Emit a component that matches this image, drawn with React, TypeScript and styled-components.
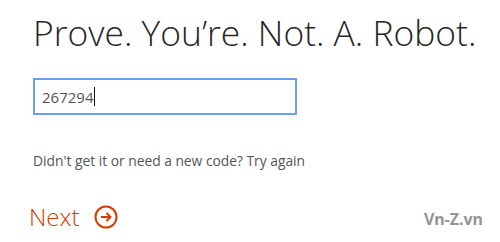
import styled, { createGlobalStyle } from "styled-components";

const Global = createGlobalStyle`
  html, body {
    margin: 0;
    padding: 0;
    background: #fff;
  }
  body {
    font-family: "Open Sans", "Noto Sans", sans-serif;
  }
`;

const Page = styled.div`
  position: relative;
  width: 500px;
  height: 242px;
  overflow: hidden;
  padding: 8px 0 0 33px;
  box-sizing: border-box;
  display: flex;
  flex-direction: column;
`;

const Title = styled.h1`
  margin: 0;
  font-family: "Open Sans", sans-serif;
  font-weight: 300;
  font-size: 35.4px;
  line-height: 48px;
  color: #262626;
  white-space: nowrap;
`;

const CodeBox = styled.div`
  margin-top: 22px;
  width: 264px;
  height: 37px;
  box-sizing: border-box;
  border: 2px solid #6a9ef0;
  display: flex;
  align-items: center;
  padding-left: 7px;
`;

const CodeText = styled.span`
  font-size: 15px;
  color: #555;
`;

const Caret = styled.span`
  display: inline-block;
  width: 1px;
  height: 19px;
  background: #111;
  margin-left: 1px;
`;

const Hint = styled.p`
  margin: 37px 0 0;
  font-size: 13.8px;
  line-height: 18px;
  color: #555;
  white-space: nowrap;
`;

const NextButton = styled.div`
  margin-top: 32px;
  margin-left: -4px;
  display: flex;
  align-items: center;
  gap: 15px;
  color: #d83b01;
  font-size: 24px;
  line-height: 30px;
  font-weight: 300;
`;

const Watermark = styled.div`
  position: absolute;
  right: 17px;
  bottom: 12px;
  font-family: "Noto Sans", sans-serif;
  font-weight: 700;
  font-size: 16px;
  color: #959595;
`;

export default function App() {
  return (
    <>
      <Global />
      <Page>
        <Title>Prove. You’re. Not. A. Robot.</Title>
        <CodeBox>
          <CodeText>267294</CodeText>
          <Caret />
        </CodeBox>
        <Hint>Didn't get it or need a new code? Try again</Hint>
        <NextButton>
          <span>Next</span>
          <svg width="24" height="24" viewBox="0 0 24 24" fill="none" stroke="#d83b01" strokeWidth="2">
            <circle cx="12" cy="12" r="10.5" />
            <path d="M7 12h9.5M12.5 8l4 4-4 4" />
          </svg>
        </NextButton>
        <Watermark>Vn-Z.vn</Watermark>
      </Page>
    </>
  );
}
